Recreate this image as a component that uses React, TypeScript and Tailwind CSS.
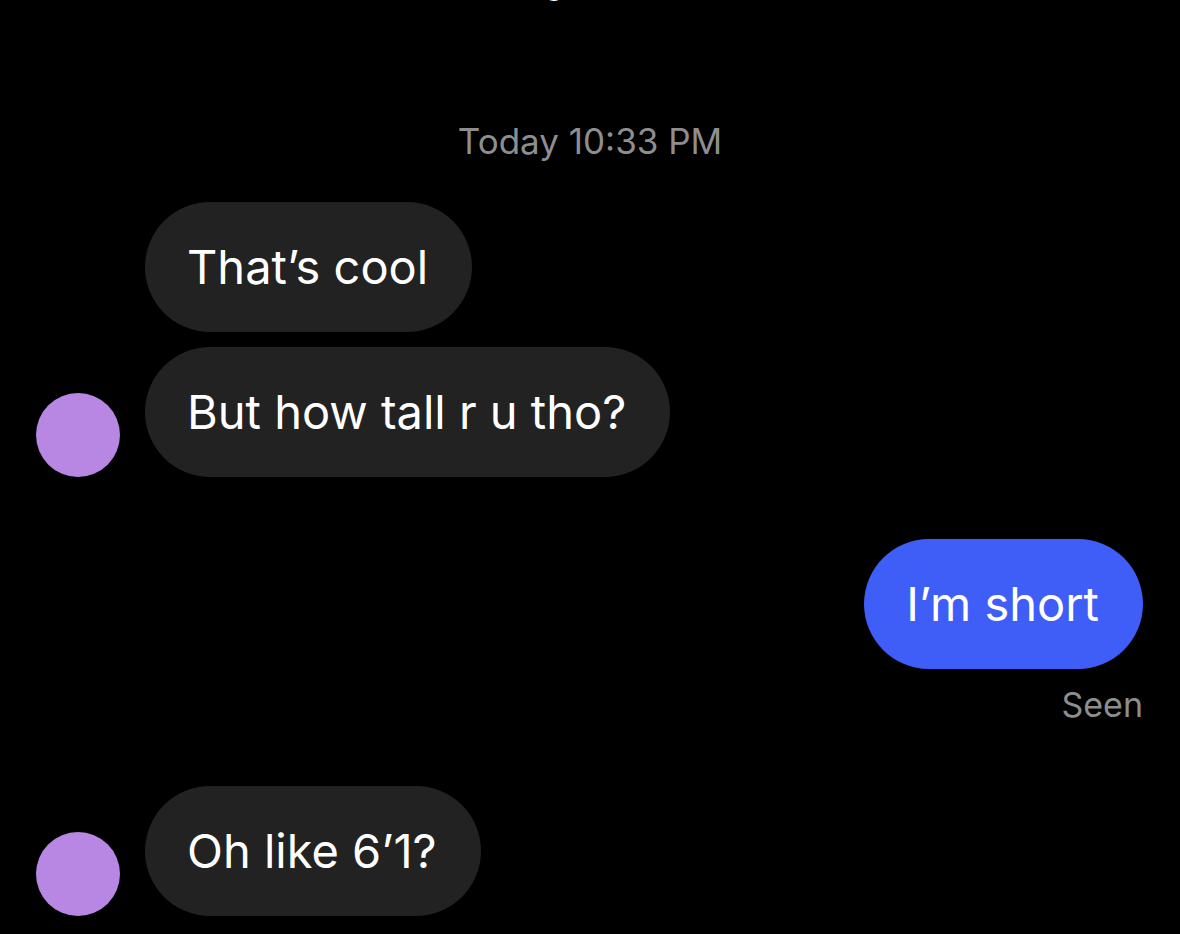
const Avatar = () => (
  <div className="h-[84px] w-[84px] shrink-0 rounded-full bg-[#b886e3]" />
);

const Bubble = ({ text, blue = false }: { text: string; blue?: boolean }) => (
  <div
    className={
      blue
        ? "flex h-[130px] items-center rounded-full bg-[#3f5ef8] pl-[42px] pr-[44px] text-[47px] text-white"
        : "flex h-[130px] items-center rounded-full bg-[#222222] pl-[42px] pr-[44px] text-[47px] text-white"
    }
  >
    {text}
  </div>
);

export default function App() {
  return (
    <div className="flex h-[934px] w-[1180px] flex-col overflow-hidden bg-black font-['Inter','Liberation_Sans',sans-serif]">
      <div className="h-[6px] overflow-hidden pl-[544px]">
        <span className="-mt-[40px] block text-[33px] leading-[44px] text-white">g</span>
      </div>

      <div className="mt-[114px] text-center text-[35px] leading-[42px] text-[#8e8e8e]">Today 10:33 PM</div>

      <div className="mt-[40px] flex items-end gap-[25px] pl-[36px]">
        <Avatar />
        <div className="flex flex-col items-start gap-[15px]">
          <Bubble text="That’s cool" />
          <Bubble text="But how tall r u tho?" />
        </div>
      </div>

      <div className="mt-[62px] flex flex-col items-end pr-[37px]">
        <Bubble text="I’m short" blue />
        <div className="mt-[15px] text-[34px] leading-[42px] text-[#8e8e8e]">Seen</div>
      </div>

      <div className="mt-[60px] flex items-end gap-[25px] pl-[36px]">
        <Avatar />
        <Bubble text="Oh like 6’1?" />
      </div>
    </div>
  );
}
